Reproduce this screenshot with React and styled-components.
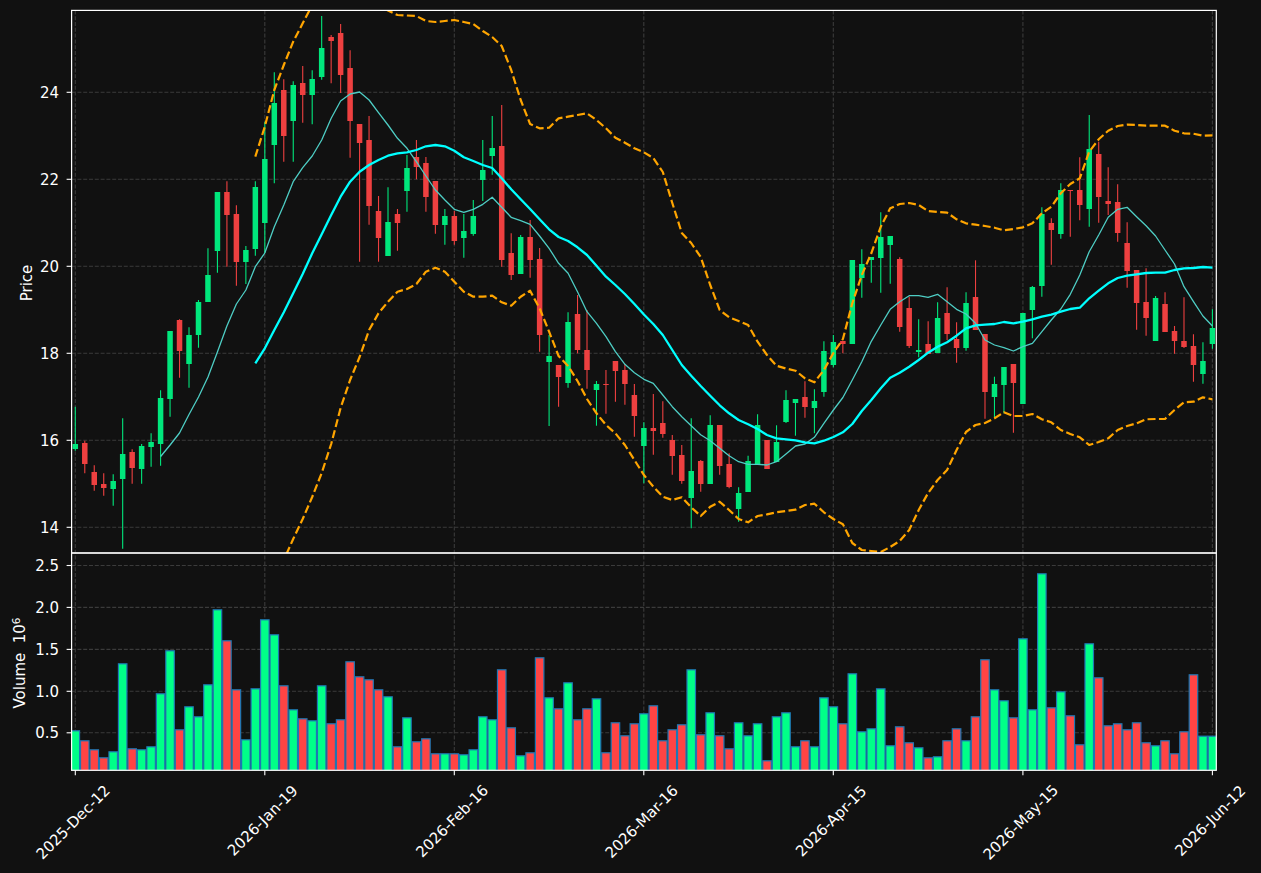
import React from "react";
import styled, { createGlobalStyle } from "styled-components";

const GlobalStyle = createGlobalStyle`
  html, body { margin: 0; padding: 0; background: #111111; }
  #root { width: 100%; height: 873px; overflow: hidden; }
`;

const Figure = styled.main`
  width: 1261px;
  height: 873px;
  background: #111111;
`;
const ChartSvg = styled.svg`
  display: block;
  width: 1261px;
  height: 873px;
  font-family: "DejaVu Sans", sans-serif;
`;
const GridLine = styled.line`
  stroke: #3b3b3b;
  stroke-width: 1.1;
  stroke-dasharray: 4 1.8;
`;
const TickMark = styled.line`
  stroke: #ffffff;
  stroke-width: 1.1;
`;
const Spine = styled.rect`
  fill: none;
  stroke: #ffffff;
  stroke-width: 1.2;
`;
const Wick = styled.line`
  stroke: ${(p) => (p.$up ? "#00e77c" : "#ee4040")};
  stroke-width: 1.1;
`;
const Body = styled.rect`
  fill: ${(p) => (p.$up ? "#00e77c" : "#ee4040")};
`;
const VolumeBar = styled.rect`
  fill: ${(p) => (p.$up ? "#00ff88" : "#ff4444")};
  stroke: #1f77b4;
  stroke-width: 1.2;
`;
const Curve = styled.polyline`
  fill: none;
  stroke-linejoin: round;
  stroke: ${(p) => p.$color};
  stroke-width: ${(p) => p.$width};
  stroke-dasharray: ${(p) => (p.$dashed ? "8 3.4" : "none")};
`;
const TickLabel = styled.text`
  fill: #ffffff;
  font-size: 15px;
  text-anchor: ${(p) => p.$anchor || "end"};
`;
const AxisTitle = styled.text`
  fill: #ffffff;
  font-size: 15px;
  text-anchor: middle;
`;
const Exponent = styled.tspan`
  font-size: 10.5px;
`;

const X0 = 75.3;
const STEP = 9.476;
const xAt = (i) => X0 + STEP * i;

const candles = [
  [444,449,406.7,450.7,1],[443,464,440.7,473.3,0],[472,485,465.3,490.7,0],[484,488,473.3,495.7,0],
  [481,489,474.3,505.7,1],[454,479,418.3,548.7,1],[452,468,449.3,483.7,0],[446,469,444,483.7,1],
  [442,447,433.3,466.7,1],[398,444,390.3,465.7,1],[331,399,331,416.7,1],[320,351,319.3,377.7,0],
  [335,364,327.3,387.7,1],[302,335,300,347.7,1],[275,302,248.3,302,1],[192,251,192,272.7,1],
  [192,215,181.3,266.7,0],[214,262,205.3,285.7,0],[250,262,246,284,1],[187,249,181.3,255.7,1],
  [159,223,121.7,253,1],[103,145,72.3,183.3,1],[90,136,79.3,161.7,0],[85,121,81.3,161.7,1],
  [83,95,66,122.7,0],[79,95,70.3,124.3,1],[48,77,16,79.7,1],[37,41,35,83.3,0],
  [33,75,24,93,0],[68,121,50.3,157.7,0],[124,143,124,261.7,0],[140,206,116,224.7,0],
  [211,238,196,261.7,0],[222,256,187.3,256,1],[214,223,209,250.7,0],[168,191,155,211.7,1],
  [157,167,140,179.3,0],[163,197,157,211.7,0],[181,225,181,233.7,0],[216,225,209,244.7,1],
  [216,241,211,244.7,0],[231,238,214,257.7,1],[216,234,200,235.7,1],[170,180,140,201,1],
  [148,156,116,174.7,1],[146,260,105,266.7,0],[253,275,233.3,280,0],[237,274,235,274,1],
  [237,260,220,277.7,0],[259,335,248,351.7,0],[356,362,335,426,1],[365,377,365,406.7,0],
  [322,383,312.3,387.7,1],[314,350,295,353.3,0],[350,370,310,388.7,0],[384,390,381,425.7,1],
  [384,385,370,413.7,0],[361,371,361,401.7,0],[370,384,364,404.7,0],[395,416,384,436.7,0],
  [428,446,422.3,483.3,1],[428,431,394,454.7,0],[423,434,401.3,437.7,0],[440,456,435,474.7,0],
  [455,481,445,483.7,0],[471,498,418.3,528.3,1],[461,484,460,491.7,0],[425,484,415.3,484,1],
  [425,466,425,474.7,0],[464,487,453.3,488.3,0],[493,509,487.3,521.7,1],[461,492,455.7,492,1],
  [425,464,414.3,464,1],[440,469,440,469,0],[442,462,425.3,462,1],[400,422,390.3,423,1],
  [399,403,399,435.7,1],[397,407,381.3,417.7,0],[401,408,389.3,433.3,1],[351,392,341.3,396.7,1],
  [342,365,335,367.3,1],[341,344,341,353.3,0],[260,344,260,344,1],[264,278,249.3,297.7,1],
  [257,260,257,282.7,1],[237,258,212.3,292.7,1],[236,245,236,283.7,1],[259,327,257.3,331.7,0],
  [308,346,296.7,348,0],[350,352,319.3,357.3,1],[344,354,321.3,354,0],[318,353,302.3,353,1],
  [313,334,287.3,340,0],[339,348,322.3,362.7,0],[303,348,292.3,350.7,1],[297,330,260.3,330,0],
  [334,392,334,418.7,0],[384,397,376.7,418,1],[367,385,367,413.3,1],[364,383,364,432.7,0],
  [313,404,313,404,1],[287,310,286,338.3,1],[214,286,207.3,296.7,1],[223,230,218.3,264.7,0],
  [190,234,183.3,238.7,1],[190,191,190,236.7,0],[190,205,157.3,220.3,0],[149,209,115,226.7,1],
  [154,197,141.7,222.7,0],[201,204,167.3,215,0],[202,233,184.3,241.7,0],[243,271,222.3,287.7,0],
  [270,303,270,329.7,0],[302,318,268.3,335.7,0],[298,341,296,341,1],[304,332,292.3,332,0],
  [331,341,326,353.7,0],[341,347,297.3,348,0],[346,365,334.3,381.7,0],[361,374,342.3,383.7,1],
  [328,344,309.3,348.7,1],
];

const volumeTops = [
  730.3,740.3,749.3,757.3,751.3,663.3,748.3,749.3,746.3,693.3,650.3,729.3,706.3,716.3,684.3,609.3,
  640.3,689.3,739.3,688.3,619.3,634.3,685.3,709.3,718.3,720.3,685.3,723.3,719.3,661.3,676.3,679.3,
  689.3,696.3,746.3,717.3,741.3,738.3,753.3,753.3,753.3,754.3,749.3,716.3,719.3,669.3,727.3,755.3,
  752.3,657.3,697.3,708.3,682.3,719.3,708.3,698.3,752.3,722.3,735.3,723.3,713.3,705.3,740.3,729.3,
  724.3,669.3,734.3,712.3,735.3,748.3,722.3,735.3,723.3,760.3,716.3,712.3,746.3,740.3,746.3,697.3,
  706.3,723.3,673.3,731.3,728.3,688.3,745.3,726.3,742.3,747.3,757.3,756.3,740.3,728.3,740.3,716.3,
  659.3,689.3,700.3,717.3,638.3,709.3,573.3,707.3,691.3,715.3,744.3,643.3,677.3,725.3,723.3,729.3,
  722.3,742.3,745.3,740.3,753.3,731.3,674.3,735.7,735.7,
];

const tealFrom9 = [
  456.5,445,433,414.5,397,377,352,326,304,290,266.7,253,226.7,205,181.7,167.7,156,140,118.3,101,94,92,
  100,112.7,125,138.3,148.3,161.7,176,190,200,209.3,212.3,209.3,204.3,197.3,207.3,217.3,220.7,224.3,
  236,248.3,263.3,273.3,291.7,311.7,323.3,336.7,351.7,364.3,372.7,379.3,383.3,395,406.7,416.7,425.7,
  434.7,440.7,448.3,455.7,461.7,464.3,464.3,465,461.7,454,446,444,437.3,423.3,410,397.5,380,361.7,
  341.3,325,309.3,301.7,295.7,295.7,297.3,294.3,301.7,309.3,314,323.3,340,345,347.7,351,346.7,343.3,
  331.7,320,309,294.3,275,251.7,235,217.3,209.3,207.3,216.7,225.7,236,250,264,286.7,301.7,316,326,
];
const cyanFrom19 = [
  363.3,348.3,330,312.3,293.3,274,253.3,234.3,215,196.7,181.7,171.7,165,160,155.7,153.3,152.3,150,
  146.3,145,146.3,150.7,157.3,161,165,168,178.3,189.3,199.3,209,219.3,229.3,237,241,247.3,255,265.7,
  276.7,285,294,304,314.5,324,335,350,365,375.7,386,395.7,405.3,413.3,420,424.3,429,435,438.3,439.3,
  440.3,442.3,443.3,440.7,437,432.3,424,411,400,388.3,377.7,372.7,366.7,360,352.7,346.7,342.3,335.7,
  328.3,325.3,324.7,324,322,323.3,321.7,319.3,316.7,314.7,311.7,309,307.7,298.3,290.7,283.3,278,
  275.7,274.3,273,272.7,272.7,270,268.3,268,267,267.7,
];
const upperFrom19 = [
  156.7,126.7,90,65,41.7,23.3,5,-8,-15,-15,-10,-5,0,5,10.5,15,15.5,16,21,22,21,20,22,24,31,37,46,70,
  100,124,128.3,127.7,118.3,116.7,115,113.3,120,128.3,137.7,142.7,148.3,152.3,158,172,203,233,243,
  257,285,310,317.3,321,325,341.7,355,365.7,368.5,370.7,378.3,382.3,370,353,339,303.3,275,253.3,
  226.7,208.3,204,203,205,211,212,212.7,219.3,223.3,224.7,226,227.7,230.3,229,227.3,223.3,213.3,
  206.7,193.3,184,178.3,151.7,139.3,130.7,126,124.7,125,125.7,125.7,125.7,130.7,133.3,133.7,135.7,
  135.3,
];
const lowerFrom19 = [
  640,610,585,560,539,519,497,473,444,408,380,357,330,313.3,301.7,291.7,289,284,271.7,267.7,271.7,
  281.7,291.7,296.7,296.7,295.7,302.3,305.7,296.7,290.7,308.3,331.7,356,366,381,399,413.3,425,433.3,
  445,460,475,486.7,496.7,500,497.3,507.3,516,506.7,501.7,510,519,522.3,516,514.3,512.3,511,509.7,
  505,503.7,512.3,519,524.3,543,550,551,552,547,541,530,510,493,480,470,450,432,425,423,418.3,412.3,
  416,416,414,419.3,422.3,430,434,437.3,445,442,438.3,430,426,423.3,419.3,419,419,410,402.3,401.7,
  397.3,399.3,
];

const toPoints = (ys, from) => ys.map((y, k) => `${xAt(from + k).toFixed(1)},${y}`).join(" ");

const AXIS = { left: 71.6, right: 1216.3, top: 10.4, mid: 553, bottom: 770.3 };
const priceTicks = [
  { label: "24", y: 92.3 }, { label: "22", y: 179.3 }, { label: "20", y: 266.3 },
  { label: "18", y: 353.3 }, { label: "16", y: 440.3 }, { label: "14", y: 527.3 },
];
const volumeTicks = [
  { label: "2.5", y: 565.5 }, { label: "2.0", y: 607.4 }, { label: "1.5", y: 649.4 },
  { label: "1.0", y: 691.3 }, { label: "0.5", y: 732.8 },
];
const dateTicks = [
  { label: "2025-Dec-12", x: 75.3, cy: 822 },
  { label: "2026-Jan-19", x: 264.8, cy: 820.5 },
  { label: "2026-Feb-16", x: 454.3, cy: 821 },
  { label: "2026-Mar-16", x: 643.8, cy: 821.5 },
  { label: "2026-Apr-15", x: 833.3, cy: 821 },
  { label: "2026-May-15", x: 1022.9, cy: 822 },
  { label: "2026-Jun-12", x: 1212.4, cy: 820.5 },
];

const PricePanel = () => (
  <g clipPath="url(#price-clip)">
    {candles.map(([top, bot, wt, wb, up], i) => (
      <g key={i}>
        <Wick $up={up} x1={xAt(i)} x2={xAt(i)} y1={wt} y2={wb} />
        <Body $up={up} x={xAt(i) - 2.75} width={5.5} y={top} height={bot - top} />
      </g>
    ))}
    <Curve points={toPoints(tealFrom9, 9)} $color="#4ecdc4" $width={1.3} />
    <Curve points={toPoints(cyanFrom19, 19)} $color="#00ffff" $width={2.3} />
    <Curve points={toPoints(upperFrom19, 19)} $color="#ffa500" $width={2.2} $dashed />
    <Curve points={toPoints(lowerFrom19, 19)} $color="#ffa500" $width={2.2} $dashed />
  </g>
);

const VolumePanel = () => (
  <g clipPath="url(#volume-clip)">
    {volumeTops.map((top, i) => (
      <VolumeBar
        key={i}
        $up={candles[i][4]}
        x={xAt(i) - 4.25}
        width={8.5}
        y={top + 0.5}
        height={AXIS.bottom - top}
      />
    ))}
  </g>
);

export default function App() {
  return (
    <Figure>
      <GlobalStyle />
      <ChartSvg viewBox="0 0 1261 873">
        <defs>
          <clipPath id="price-clip">
            <rect x={AXIS.left} y={AXIS.top} width={AXIS.right - AXIS.left} height={AXIS.mid - AXIS.top} />
          </clipPath>
          <clipPath id="volume-clip">
            <rect x={AXIS.left} y={AXIS.mid} width={AXIS.right - AXIS.left} height={AXIS.bottom - AXIS.mid} />
          </clipPath>
        </defs>

        {dateTicks.map((t) => (
          <GridLine key={t.label} x1={t.x} x2={t.x} y1={AXIS.top} y2={AXIS.bottom} />
        ))}
        {[...priceTicks, ...volumeTicks].map((t) => (
          <GridLine key={t.label} x1={AXIS.left} x2={AXIS.right} y1={t.y} y2={t.y} />
        ))}

        <PricePanel />
        <VolumePanel />

        <Spine x={AXIS.left} y={AXIS.top} width={AXIS.right - AXIS.left} height={AXIS.mid - AXIS.top} />
        <Spine x={AXIS.left} y={AXIS.mid} width={AXIS.right - AXIS.left} height={AXIS.bottom - AXIS.mid} />

        {[...priceTicks, ...volumeTicks].map((t) => (
          <g key={t.label}>
            <TickMark x1={AXIS.left - 5} x2={AXIS.left} y1={t.y} y2={t.y} />
            <TickLabel x={59} y={t.y + 5.4}>{t.label}</TickLabel>
          </g>
        ))}
        {dateTicks.map((t) => (
          <g key={t.label}>
            <TickMark x1={t.x} x2={t.x} y1={AXIS.bottom} y2={AXIS.bottom + 5} />
            <TickLabel
              $anchor="middle"
              transform={`translate(${t.x - 2.4} ${t.cy}) rotate(-45)`}
              y={5.4}
            >
              {t.label}
            </TickLabel>
          </g>
        ))}

        <AxisTitle transform="translate(32 283) rotate(-90)">Price</AxisTitle>
        <AxisTitle transform="translate(25 663) rotate(-90)">
          Volume{"\u00a0\u00a0"}10<Exponent dy={-5.5}>6</Exponent>
        </AxisTitle>
      </ChartSvg>
    </Figure>
  );
}
